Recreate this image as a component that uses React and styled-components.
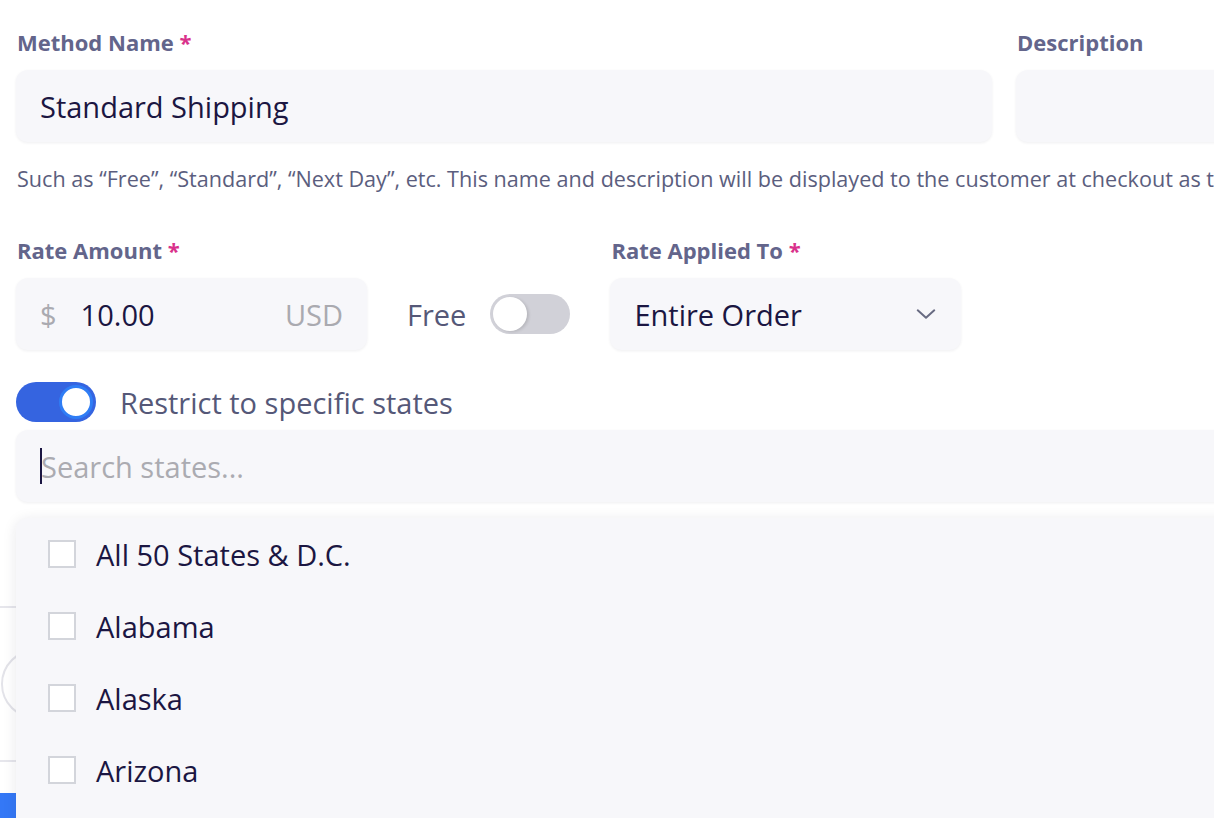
import React from "react";
import styled, { createGlobalStyle } from "styled-components";

const GlobalStyle = createGlobalStyle`
  html, body {
    margin: 0;
    padding: 0;
    background: #ffffff;
    overflow: hidden;
  }
  body {
    font-family: "Open Sans", "Noto Sans", sans-serif;
    color: #1b1642;
  }
`;

const states = ["All 50 States & D.C.", "Alabama", "Alaska", "Arizona", "Arkansas", "California"];

const App = () => {
  return (
    <>
      <GlobalStyle />
      <Page>
        <Form>
          <TopRow>
            <Field>
              <Label>
                Method Name <Req>*</Req>
              </Label>
              <InputBox>
                <Value>Standard Shipping</Value>
              </InputBox>
            </Field>
            <Field>
              <Label>Description</Label>
              <InputBox />
            </Field>
          </TopRow>
          <Helper>
            Such as “Free”, “Standard”, “Next Day”, etc. This name and description will be
            displayed to the customer at checkout as they choose a shipping method.
          </Helper>

          <RateRow>
            <Field>
              <Label>
                Rate Amount <Req>*</Req>
              </Label>
              <InputBox $width="351px" $gap="24px">
                <Affix>$</Affix>
                <Value $grow>10.00</Value>
                <Affix>USD</Affix>
              </InputBox>
            </Field>
            <FreeToggle>
              <ToggleText>Free</ToggleText>
              <Switch $on={false}>
                <Knob $on={false} />
              </Switch>
            </FreeToggle>
            <Field>
              <Label>
                Rate Applied To <Req>*</Req>
              </Label>
              <InputBox $width="351px">
                <Value $grow>Entire Order</Value>
                <svg width="22" height="22" viewBox="0 0 24 24" fill="none">
                  <path d="M3 8l9 8 9-8" stroke="#686b82" strokeWidth="2.2" strokeLinecap="round" strokeLinejoin="round" />
                </svg>
              </InputBox>
            </Field>
          </RateRow>

          <RestrictRow>
            <Switch $on>
              <Knob $on />
            </Switch>
            <ToggleText>Restrict to specific states</ToggleText>
          </RestrictRow>

          <SearchWrap>
            <InputBox>
              <Caret />
              <Placeholder>Search states...</Placeholder>
            </InputBox>
            <Dropdown>
              {states.map((s) => (
                <Option key={s}>
                  <Check />
                  <OptionText>{s}</OptionText>
                </Option>
              ))}
            </Dropdown>
          </SearchWrap>

          <Behind>
            <Divider />
            <AvatarRow>
              <Avatar />
            </AvatarRow>
            <Divider />
            <BlueButton />
          </Behind>
        </Form>
      </Page>
    </>
  );
};

const Page = styled.div`
  width: 1214px;
  height: 818px;
  overflow: hidden;
`;

const Form = styled.div`
  width: 1420px;
  padding: 28px 0 0 16px;
  display: flex;
  flex-direction: column;
`;

const TopRow = styled.div`
  display: grid;
  grid-template-columns: 976px 1fr;
  gap: 24px;
`;

const Field = styled.div`
  display: flex;
  flex-direction: column;
  gap: 14px;
`;

const Label = styled.div`
  font-size: 22px;
  line-height: 28px;
  font-weight: 700;
  color: #63658b;
  padding-left: 1px;
`;

const Req = styled.span`
  color: #d9318b;
`;

const InputBox = styled.div`
  display: flex;
  align-items: center;
  gap: ${(p) => p.$gap || "26px"};
  height: 72px;
  width: ${(p) => p.$width || "auto"};
  box-sizing: border-box;
  padding: 0 24px;
  background: #f7f7fa;
  border-radius: 12px;
  box-shadow: 0 1px 3px rgba(30, 30, 60, 0.07);
`;

const Value = styled.span`
  font-size: 29px;
  color: #1b1642;
  flex: ${(p) => (p.$grow ? 1 : "none")};
`;

const Affix = styled.span`
  font-size: 29px;
  color: #aaaab0;
`;

const Helper = styled.div`
  margin-top: 23px;
  font-size: 21.6px;
  line-height: 28px;
  color: #5b5e7e;
  white-space: nowrap;
  padding-left: 1px;
`;

const RateRow = styled.div`
  margin-top: 43px;
  display: flex;
  align-items: flex-end;
  gap: 40px;
`;

const FreeToggle = styled.div`
  display: flex;
  align-items: center;
  gap: 24px;
  height: 72px;
`;

const ToggleText = styled.span`
  font-size: 29px;
  color: #555878;
`;

const Switch = styled.div`
  width: 80px;
  height: 40px;
  border-radius: 20px;
  background: ${(p) => (p.$on ? "#3564e0" : "#d1d1d8")};
  display: flex;
  align-items: center;
  justify-content: ${(p) => (p.$on ? "flex-end" : "flex-start")};
  padding: 3px;
  box-sizing: border-box;
  flex: none;
`;

const Knob = styled.div`
  width: 34px;
  height: 34px;
  border-radius: 50%;
  background: #ffffff;
  box-sizing: border-box;
  border: ${(p) => (p.$on ? "3px solid #2f7df5" : "none")};
  box-shadow: ${(p) => (p.$on ? "none" : "2px 1px 3px rgba(0,0,0,0.12)")};
`;

const RestrictRow = styled.div`
  margin-top: 32px;
  display: flex;
  align-items: center;
  gap: 24px;
  height: 40px;
`;

const SearchWrap = styled.div`
  margin-top: 8px;
  position: relative;
  z-index: 2;
`;

const Caret = styled.span`
  width: 2px;
  height: 36px;
  background: #1b1642;
  margin-right: -27px;
`;

const Placeholder = styled.span`
  font-size: 29px;
  color: #ababb1;
`;

const Dropdown = styled.div`
  position: absolute;
  top: calc(100% + 16px);
  left: 0;
  right: 0;
  height: 420px;
  background: #f7f7fa;
  border-radius: 12px;
  box-shadow: 0 2px 14px rgba(30, 30, 60, 0.1);
  padding-left: 32px;
`;

const Option = styled.div`
  display: flex;
  align-items: center;
  gap: 20px;
  height: 72px;
`;

const Check = styled.span`
  width: 28px;
  height: 28px;
  box-sizing: border-box;
  background: #ffffff;
  border: 2px solid #d3d5db;
`;

const OptionText = styled.span`
  font-size: 29px;
  font-weight: 500;
  color: #1b1642;
`;

const Behind = styled.div`
  margin: 104px 0 0 -16px;
  display: flex;
  flex-direction: column;
`;

const Divider = styled.div`
  height: 2px;
  background: #e6e6ec;
`;

const AvatarRow = styled.div`
  height: 152px;
  display: flex;
  align-items: center;
  padding-left: 1px;
`;

const Avatar = styled.div`
  width: 70px;
  height: 70px;
  border-radius: 50%;
  border: 2px solid #e3e3e9;
  box-sizing: border-box;
`;

const BlueButton = styled.div`
  margin-top: 31px;
  height: 60px;
  width: 240px;
  background: #3478f6;
  border-radius: 0 8px 8px 0;
`;

export default App;
